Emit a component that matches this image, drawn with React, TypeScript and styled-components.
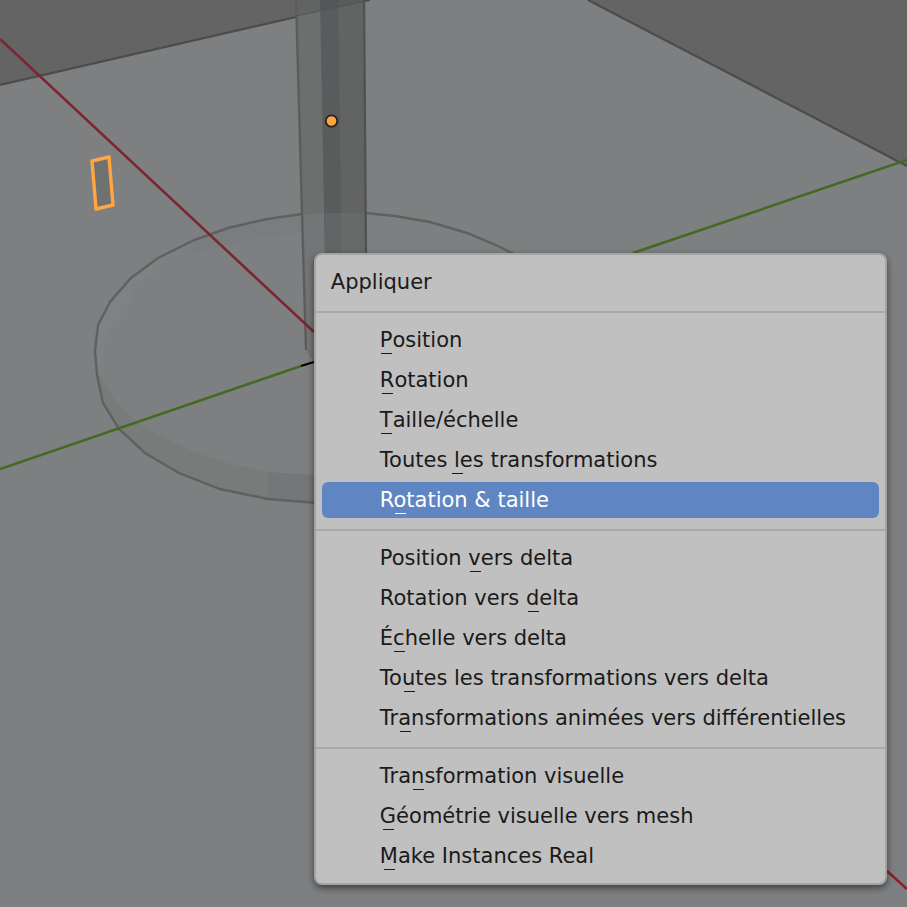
import React from "react";
import styled, { createGlobalStyle } from "styled-components";

const GlobalStyle = createGlobalStyle`
  *, *::before, *::after { box-sizing: border-box; }
  body {
    margin: 0;
    background: #7d7f80;
    font-family: "DejaVu Sans", sans-serif;
  }
`;

const Viewport = styled.main`
  position: relative;
  display: flex;
  align-items: flex-start;
  justify-content: flex-end;
  min-height: 100vh;
  padding: 253px 20px 20px;
  overflow: hidden;
`;

const Scene = styled.svg`
  position: absolute;
  inset: 0;
  width: 100%;
  height: 100%;
`;

const Menu = styled.section`
  position: relative;
  border: 2px solid #a3a4a4;
  border-radius: 8px;
  background: #c0c0c0;
  color: #1a1a1a;
  box-shadow: 0 3px 7px rgba(0, 0, 0, 0.5);
`;

const Title = styled.h1`
  margin: 0;
  padding: 7px 15px 9px;
  font-size: 21px;
  font-weight: 400;
  line-height: 40px;
`;

const Group = styled.div`
  display: flex;
  flex-direction: column;
  gap: 4px;
  padding: 9px 6px 11px;
  border-top: 2px solid #a9a9a9;

  &:last-child {
    padding-bottom: 9px;
  }
`;

const Item = styled.button<{ $active: boolean }>`
  height: 36px;
  padding: 0 33px 0 58px;
  border: 0;
  border-radius: 6px;
  background: ${(p) => (p.$active ? "#5f86c3" : "transparent")};
  color: ${(p) => (p.$active ? "#ffffff" : "#1a1a1a")};
  font-family: inherit;
  font-size: 21px;
  line-height: 36px;
  text-align: left;
  white-space: nowrap;
  cursor: default;
`;

const AccessKey = styled.span`
  position: relative;

  &::after {
    content: "";
    position: absolute;
    bottom: -2px;
    left: 50%;
    width: 11px;
    height: 1px;
    margin-left: -5px;
    background: currentColor;
  }
`;

type Entry = { label: string; keyIndex: number; active?: boolean };

const groups: Entry[][] = [
  [
    { label: "Position", keyIndex: 0 },
    { label: "Rotation", keyIndex: 0 },
    { label: "Taille/échelle", keyIndex: 0 },
    { label: "Toutes les transformations", keyIndex: 7 },
    { label: "Rotation & taille", keyIndex: 1, active: true },
  ],
  [
    { label: "Position vers delta", keyIndex: 9 },
    { label: "Rotation vers delta", keyIndex: 14 },
    { label: "Échelle vers delta", keyIndex: 1 },
    { label: "Toutes les transformations vers delta", keyIndex: 2 },
    { label: "Transformations animées vers différentielles", keyIndex: 2 },
  ],
  [
    { label: "Transformation visuelle", keyIndex: 3 },
    { label: "Géométrie visuelle vers mesh", keyIndex: 0 },
    { label: "Make Instances Real", keyIndex: 0 },
  ],
];

function SceneDrawing() {
  return (
    <Scene viewBox="0 0 907 907" preserveAspectRatio="xMidYMid slice" aria-hidden="true">
      <rect width="907" height="907" fill="#7d7f80" />
      {/* background behind the floor plane */}
      <path d="M0 0H370L0 85Z" fill="#646464" />
      <path d="M588 0H907V166Z" fill="#646464" />
      <path d="M0 85L370 0M588 0L907 166" stroke="#4b4c4c" strokeWidth="2.2" fill="none" />

      {/* disc base */}
      <path d="M302 214L267 219L228 228L190 242L192 254L240 241L305 232Z" fill="#7a7c7d" />
      <path d="M158 258L131 278L110 302L98 325L95 351L98 370L108 332L132 302L133 285L160 272Z" fill="#7f8182" />
      <path d="M97 372L103 403L119 429L145 453L179 473L220 489L268 499V472L226 463L190 450L146 429L118 405Z" fill="#787b79" />
      <path d="M268 499L330 504V476L268 472Z" fill="#747677" />
      <path
        d="M302 214L267 219L228 228L194 240L158 258L131 278L110 302L98 325L95 351L97 375L103 403L119 429L145 453L179 473L220 489L268 499L330 504"
        stroke="#5f6161"
        strokeWidth="2.4"
        fill="none"
      />
      <path d="M366 213L395 216L430 222L467 233L498 246L514 254" stroke="#5f6161" strokeWidth="2.4" fill="none" />

      {/* pole */}
      <path d="M296 0H321L326 260H314V362L306 350L302 213Z" fill="#6d6f6f" />
      <path d="M303 215L306 350L318 364V260H326L325 213Z" fill="#737576" />
      <path d="M320 0H339L342 260H325Z" fill="#5a5b5c" />
      <path d="M338 0H363L366 260H342Z" fill="#626363" />
      <path d="M296 0H363V2L296 16Z" fill="#4e4e4e" opacity="0.35" />
      <path d="M325 213H366V260H325Z" fill="#7d7f80" opacity="0.25" />
      <path d="M296 0L302 213L306 350" stroke="#5b5d5d" strokeWidth="2.4" fill="none" />
      <path d="M364 0L366 260" stroke="#515252" strokeWidth="2.4" fill="none" />
      <path d="M296 16L366 1" stroke="#535454" strokeWidth="1" fill="none" />

      {/* axes */}
      <path d="M0 39L314 332" stroke="#7c2630" strokeWidth="2.6" />
      <path d="M887 871L907 889" stroke="#8c1f2c" strokeWidth="2.6" />
      <path d="M0 469L301 366M633 253L907 160" stroke="#446a22" strokeWidth="2.6" fill="none" />
      <path d="M301 366L330 357" stroke="#000000" strokeWidth="2.2" />

      {/* selected object and its origin */}
      <path d="M92 161L109 157L113 205L96 209Z" fill="#707171" stroke="#ffa640" strokeWidth="3.4" strokeLinejoin="round" />
      <circle cx="331.5" cy="121" r="5.7" fill="#ffa640" stroke="#222322" strokeWidth="1.8" />
    </Scene>
  );
}

function MenuItem({ label, keyIndex, active = false }: Entry) {
  return (
    <Item type="button" role="menuitem" $active={active}>
      {label.slice(0, keyIndex)}
      <AccessKey>{label[keyIndex]}</AccessKey>
      {label.slice(keyIndex + 1)}
    </Item>
  );
}

export default function App() {
  return (
    <>
      <GlobalStyle />
      <Viewport>
        <SceneDrawing />
        <Menu aria-labelledby="menu-title">
          <Title id="menu-title">Appliquer</Title>
          <div role="menu" aria-labelledby="menu-title">
            {groups.map((entries) => (
              <Group key={entries[0].label} role="group">
                {entries.map((entry) => (
                  <MenuItem key={entry.label} {...entry} />
                ))}
              </Group>
            ))}
          </div>
        </Menu>
      </Viewport>
    </>
  );
}
